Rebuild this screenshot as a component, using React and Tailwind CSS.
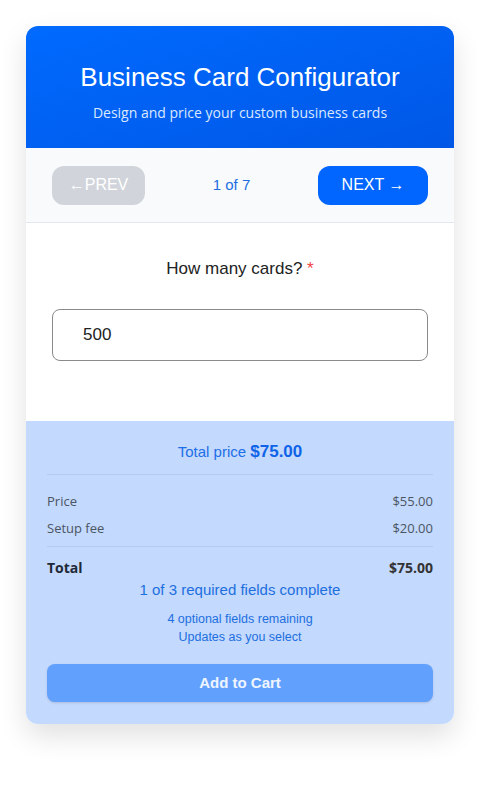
import React from "react";

const arial = { fontFamily: '"Liberation Sans", Arial, sans-serif' };

const App = () => {
  return (
    <div className="min-h-screen bg-white pt-[26px] px-[26px] font-['Liberation_Sans',Arial,sans-serif]">
      <div className="w-[428px] rounded-xl overflow-hidden shadow-[0_12px_28px_rgba(0,0,0,0.12)]">
        <div className="h-[122px] bg-gradient-to-br from-[#006aff] to-[#0057e6] flex flex-col items-center pt-[36px]">
          <h1 className="text-[26px] leading-[30px] text-white">Business Card Configurator</h1>
          <p className="mt-[11px] text-[14px] leading-[20px] text-[#dbe8ff] font-['Open_Sans',sans-serif]">
            Design and price your custom business cards
          </p>
        </div>

        <div className="h-[75px] bg-[#f8fafc] border-b border-[#e2e8f0] flex items-center px-[26px]">
          <button className="w-[93px] h-[39px] rounded-xl bg-[#d1d5db] text-white text-[16px]">
            ←PREV
          </button>
          <div className="flex-1 text-center text-[15px] text-[#1d6fe0]">1 of 7</div>
          <button className="w-[110px] h-[39px] rounded-xl bg-[#0066ff] text-white text-[16px]">
            NEXT →
          </button>
        </div>

        <div className="h-[198px] bg-white px-[26px] pt-[36px]">
          <div className="text-center text-[17px] leading-[20px] text-[#222]">
            How many cards? <span className="text-[#ef4444]">*</span>
          </div>
          <div className="mt-[30px] h-[52px] rounded-lg border border-[#8a8a8a] flex items-center pl-[30px] text-[17px] text-[#222]">
            500
          </div>
        </div>

        <div className="bg-[#c3d9fd] px-[21px] pt-[20px] pb-[22px]">
          <div className="text-center text-[15px] leading-[22px] text-[#1d6fe8]">
            Total price <span className="text-[17px] font-bold text-[#0f63e8]">$75.00</span>
          </div>
          <div className="mt-[11px] border-t border-[#b3ccf2]"></div>
          <div className="pt-[13px] font-['Open_Sans',sans-serif] text-[13px] text-[#4b5563]">
            <div className="flex justify-between h-[27px] items-center">
              <span>Price</span>
              <span>$55.00</span>
            </div>
            <div className="flex justify-between h-[27px] items-center">
              <span>Setup fee</span>
              <span>$20.00</span>
            </div>
            <div className="border-t border-[#b3ccf2] mt-[4px]"></div>
            <div className="flex justify-between h-[31px] items-center pt-[9px] font-bold text-[14px] text-[#1f2937]">
              <span>Total</span>
              <span className="text-[#333]">$75.00</span>
            </div>
          </div>
          <div className="text-center text-[15px] leading-[20px] text-[#1d6fe0] mt-[2px]" style={arial}>
            1 of 3 required fields complete
          </div>
          <div className="mt-[10px] text-center text-[12.5px] leading-[18px] text-[#1d6fe0]">
            <div>4 optional fields remaining</div>
            <div>Updates as you select</div>
          </div>
          <button className="mt-[18px] w-full h-[38px] rounded-lg bg-[#62a0fd] text-white/90 font-bold text-[15px] shadow-sm">
            Add to Cart
          </button>
        </div>
      </div>
    </div>
  );
};

export default App;
